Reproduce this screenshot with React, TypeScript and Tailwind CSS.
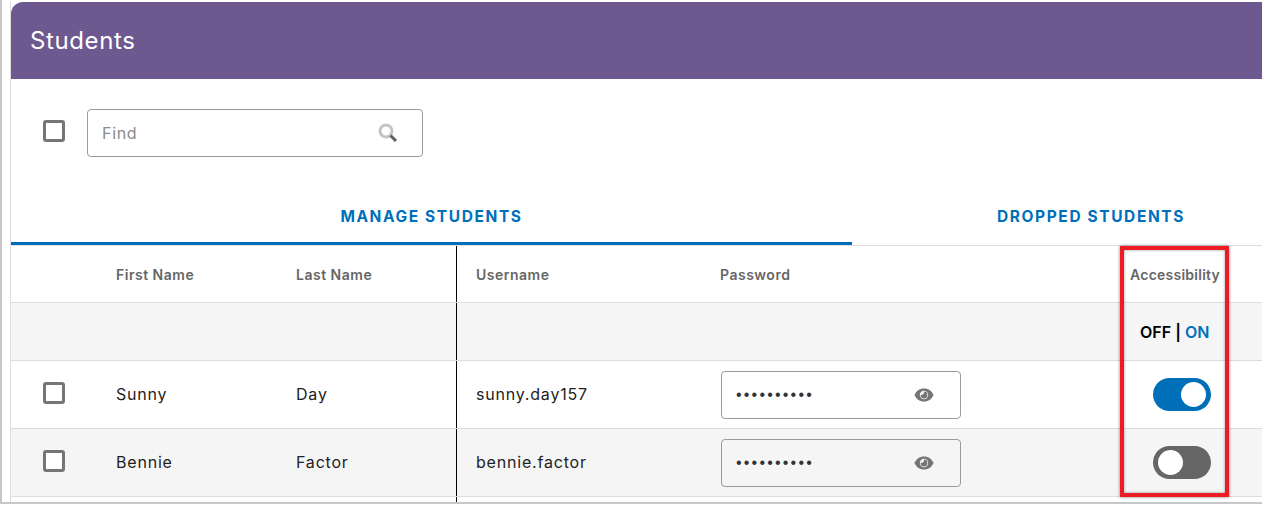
const font = "[font-family:Inter,'Noto_Sans',sans-serif]";

const Checkbox = () => (
	<div className="w-[22px] h-[22px] rounded-[3px] border-[3px] border-[#757575] bg-white" />
);

const SearchIcon = () => (
	<svg width="20" height="20" viewBox="0 0 20 20" fill="none">
		<circle cx="8" cy="8" r="6" stroke="#c4c4c4" strokeWidth="3" />
		<path d="M12.5 12.5L18 18" stroke="#5f5f5f" strokeWidth="3" />
	</svg>
);

const EyeIcon = () => (
	<svg width="20" height="14" viewBox="0 0 20 14">
		<path d="M10 0.5C5.5 0.5 2 3.2 0.5 7C2 10.8 5.5 13.5 10 13.5C14.5 13.5 18 10.8 19.5 7C18 3.2 14.5 0.5 10 0.5Z" fill="#757575" />
		<circle cx="10" cy="7" r="4.2" fill="#f5f5f5" />
		<path d="M10 3.6A3.4 3.4 0 1 1 6.6 7C8.6 7.4 10.4 5.6 10 3.6Z" fill="#757575" />
	</svg>
);

const Toggle = ({ on }: { on: boolean }) => (
	<div
		className={`w-[58px] h-[33px] rounded-full flex items-center px-[5px] ${
			on ? "bg-[#006fba] justify-end" : "bg-[#666666] justify-start"
		}`}
	>
		<div className="w-[25px] h-[25px] rounded-full bg-white" />
	</div>
);

const HeaderCell = ({ children, className }: { children?: string; className: string }) => (
	<div className={`text-[14px] font-semibold text-[#666666] ${className}`}>{children}</div>
);

const StudentRow = ({
	first,
	last,
	username,
	on,
	shaded,
}: {
	first: string;
	last: string;
	username: string;
	on: boolean;
	shaded: boolean;
}) => (
	<div
		className={`flex h-[68px] items-stretch border-b border-[#dddddd] text-[16px] tracking-[0.8px] text-[#222222] ${
			shaded ? "bg-[#f5f5f5]" : "bg-white"
		}`}
	>
		<div className="w-[105px] pl-[32px] flex items-center pb-[4px]">
			<Checkbox />
		</div>
		<div className="w-[180px] flex items-center pb-[2px]">{first}</div>
		<div className="w-[160px] flex items-center pb-[2px]">{last}</div>
		<div className="w-[265px] pl-[19px] border-l border-black flex items-center pb-[2px]">{username}</div>
		<div className="w-[432px] flex items-center">
			<div className="w-[240px] h-[48px] rounded-[4px] border border-[#9b9b9b] flex items-center justify-between pl-[14px] pr-[26px]">
				<span className="text-[#333333] text-[16px] tracking-[2.2px] font-['Liberation_Sans']">••••••••••</span>
				<EyeIcon />
			</div>
		</div>
		<div className="w-[58px] flex items-center pb-[1px]">
			<Toggle on={on} />
		</div>
	</div>
);

const App = () => {
	return (
		<div className={`w-[1262px] h-[505px] bg-white overflow-hidden ${font}`}>
			<div className="h-[504px] border-l-2 border-b-2 border-[#c8c8c8] pl-[8px] pt-[2px]">
				<div className="relative h-[500px] border-l border-[#dddddd] overflow-hidden">
					{/* ヘッダー */}
					<div className="h-[77px] bg-[#6d588f] rounded-tl-[12px] flex items-center pl-[19px] text-white text-[24px] tracking-[0.6px]">
						Students
					</div>

					{/* 検索 */}
					<div className="h-[100px] flex items-start pt-[30px] pl-[32px]">
						<div className="pt-[11px]">
							<Checkbox />
						</div>
						<div className="ml-[22px] w-[336px] h-[48px] rounded-[4px] border border-[#9b9b9b] flex items-center justify-between pl-[14px] pr-[24px]">
							<span className="text-[16px] tracking-[0.7px] text-[#8a8a8a]">Find</span>
							<SearchIcon />
						</div>
					</div>

					{/* タブ */}
					<div className="flex h-[67px] border-b border-[#dddddd]">
						<div className="w-[841px] h-[66px] border-b-[3px] border-[#006fba] flex items-center justify-center pt-[13px] text-[15.5px] font-bold tracking-[1.6px] text-[#006fba]">
							MANAGE STUDENTS
						</div>
						<div className="flex-1 flex items-center justify-center pl-[68px] pt-[9px] text-[15.5px] font-bold tracking-[1.6px] text-[#006fba] whitespace-nowrap">
							DROPPED STUDENTS
						</div>
					</div>

					{/* テーブル */}
					<div className="flex h-[57px] items-center border-b border-[#dddddd]">
						<HeaderCell className="w-[105px]" />
						<HeaderCell className="w-[180px] tracking-[0.5px]">First Name</HeaderCell>
						<HeaderCell className="w-[160px] tracking-[0.5px]">Last Name</HeaderCell>
						<div className="w-[264px] pl-[19px] h-full border-l border-black flex items-center text-[14px] font-semibold text-[#666666] tracking-[0.5px]">
							Username
						</div>
						<HeaderCell className="w-[410px] tracking-[0.5px]">Password</HeaderCell>
						<HeaderCell className="w-[92px] tracking-[0.25px] whitespace-nowrap">Accessibility</HeaderCell>
					</div>
					<div className="flex h-[58px] items-center border-b border-[#dddddd] bg-[#f5f5f5]">
						<div className="w-[445px]" />
						<div className="w-[684px] h-full border-l border-black" />
						<div className="text-[16px] font-semibold text-black whitespace-nowrap">
							OFF | <span className="text-[#006fba]">ON</span>
						</div>
					</div>
					<StudentRow first="Sunny" last="Day" username="sunny.day157" on shaded={false} />
					<StudentRow first="Bennie" last="Factor" username="bennie.factor" on={false} shaded />
					<div className="flex h-[8px]">
						<div className="w-[445px]" />
						<div className="border-l border-black" />
					</div>

					{/* 強調枠 */}
					<div className="absolute left-[1109px] top-[244px] w-[109px] h-[251px] border-[4px] border-[#ed1c24] shadow-[0_0_3px_rgba(0,0,0,0.5),inset_0_0_3px_rgba(0,0,0,0.4)]" />
				</div>
			</div>
		</div>
	);
};

export default App;
